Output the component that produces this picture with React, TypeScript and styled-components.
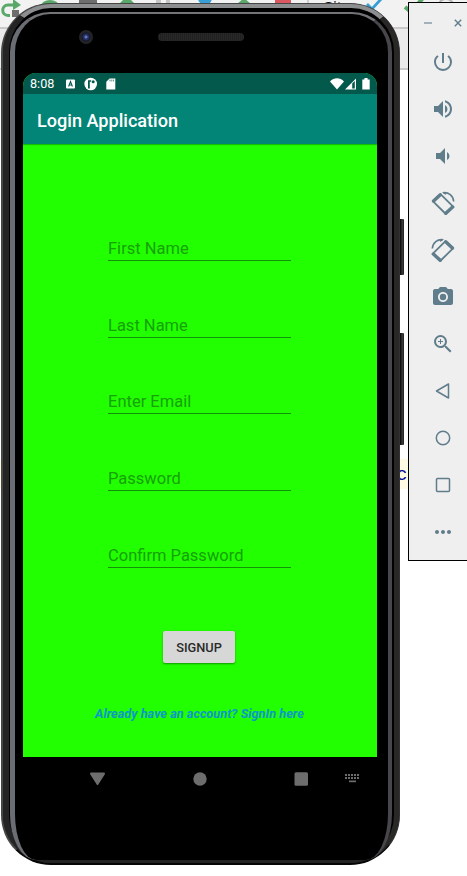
import React from "react";
import styled, { createGlobalStyle } from "styled-components";
import { MdPowerSettingsNew, MdVolumeUp, MdVolumeDown, MdCameraAlt, MdZoomIn, MdMoreHoriz } from "react-icons/md";

const GlobalStyle = createGlobalStyle`
  * { box-sizing: border-box; }
  body { margin: 0; background: #fff; font-family: Roboto, "Liberation Sans", sans-serif; }
`;

const Desktop = styled.main`
  position: relative;
  width: 467px;
  height: 876px;
  overflow: hidden;
  background: #fff;
`;

const IdeToolbar = styled.div`
  display: flex;
  align-items: flex-start;
  height: 29px;
  background: #f2f2f2;
  border-bottom: 2px solid #c9c9c9;
`;

const IdeIcon = styled.svg<{ $gap?: number }>`
  display: block;
  flex: none;
  margin-left: ${(p) => p.$gap ?? 0}px;
`;

const IdeLabel = styled.span`
  flex: none;
  width: 24px;
  margin-left: 13px;
  font: 15px/12px "Noto Sans", sans-serif;
  color: #111;
`;

const IdeTabs = styled.div`
  height: 41px;
  background: #ebebeb;
  border-bottom: 2px solid #c9c9c9;
`;

const CodeLine = styled.div`
  display: flex;
  justify-content: flex-end;
  margin-top: 389px;
  height: 30px;
  padding-right: 49px;
  background: #fffae3;
  color: #0a0a9c;
  font: 18px/32px "Liberation Mono", monospace;
`;

const Phone = styled.section`
  position: absolute;
  left: 1px;
  top: 3px;
  width: 399px;
  height: 862px;
`;

const SideKey = styled.i<{ $top: number; $height: number }>`
  position: absolute;
  right: -4px;
  top: ${(p) => p.$top}px;
  width: 7px;
  height: ${(p) => p.$height}px;
  border-radius: 0 1px 1px 0;
  background: linear-gradient(90deg, #111 0 60%, #4a4847 70%, #1c1a19);
`;

const Shell = styled.div`
  position: relative;
  height: 100%;
  border-style: solid;
  border-width: 1px 1px 2px 2px;
  border-color: #454545 #333 #050505 #464848;
  border-radius: 50px;
  background: #222;
`;

const OuterRim = styled.div`
  height: 100%;
  border-style: solid;
  border-width: 4px 5px 3px 6px;
  border-color: #8d8e90 #292827 #232323 #242424;
  border-radius: 48px;
  background: #000;
`;

const InnerRim = styled.div`
  height: 100%;
  padding: 4px 2px 0 1px;
`;

const Face = styled.div`
  height: 100%;
  display: flex;
  flex-direction: column;
  border-style: solid;
  border-width: 2px 4px 0 5px;
  border-color: #737378 #46464b #000 #6a6d73;
  border-radius: 40px 40px 26px 26px / 40px 40px 46px 46px;
  padding: 0 9px 0 8px;
  background: #000;
`;

const Earpiece = styled.div`
  display: flex;
  align-items: flex-start;
  height: 59px;
  flex: none;
  padding: 16px 0 0 56px;
`;

const Camera = styled.i`
  width: 14px;
  height: 14px;
  border-radius: 50%;
  background: radial-gradient(circle, #6677b0 0 1px, #232d62 2px 3px, #11152a 4px, #242426 5px 7px);
`;

const Speaker = styled.i`
  width: 86px;
  height: 8px;
  margin: 3px 0 0 65px;
  border-radius: 4px;
  background: repeating-linear-gradient(90deg, #202020 0 1px, #292929 1px 2px);
`;

const Screen = styled.div`
  width: 354px;
  height: 684px;
  flex: none;
  display: flex;
  flex-direction: column;
  overflow: hidden;
  border-radius: 13px 13px 0 0;
  background: #22ff00;
`;

const StatusBar = styled.div`
  display: flex;
  align-items: center;
  height: 21px;
  flex: none;
  padding: 1px 6px 0 7px;
  background: #03594c;
  color: #fff;
`;

const Clock = styled.span`
  width: 36px;
  font-size: 12.6px;
  line-height: 20px;
`;

const StatusIcons = styled.div<{ $right?: boolean }>`
  display: flex;
  align-items: center;
  margin-left: ${(p) => (p.$right ? "auto" : "0")};
`;

const AppBar = styled.header`
  display: flex;
  align-items: center;
  height: 50px;
  flex: none;
  padding: 3px 14px 0;
  background: #028577;
  color: #fff;
  font-size: 18.1px;
  font-weight: 500;
  box-shadow: 0 1px 1px rgba(0, 70, 0, 0.35);
`;

const Form = styled.form`
  display: flex;
  flex-direction: column;
  align-items: center;
  padding: 92px 2px 0 0;
`;

const Field = styled.label`
  width: 183px;
  height: 25px;
  margin: 0 0 51.7px;
  padding-left: 0.5px;
  border-bottom: 1px solid #14930a;
  color: #16a208;
  font-size: 16.5px;
  line-height: 25px;
  white-space: nowrap;
`;

const SignupButton = styled.button`
  width: 72px;
  height: 32px;
  margin-top: 11.5px;
  padding: 2px 0 0;
  border: 0;
  border-radius: 2px;
  background: #d6d7d6;
  box-shadow: 0 1px 2px rgba(0, 50, 0, 0.5);
  color: #2a2a2a;
  font: 500 12.8px/30px Roboto, sans-serif;
`;

const SignInLink = styled.a`
  margin: 42px 0 0 1px;
  color: #0b98c8;
  font-size: 12.75px;
  font-style: italic;
  font-weight: 700;
  line-height: 18px;
  white-space: nowrap;
`;

const NavBar = styled.nav`
  display: flex;
  align-items: center;
  height: 43px;
  width: 354px;
  padding-left: 67px;
`;

const NavIcon = styled.svg<{ $gap?: number }>`
  flex: none;
  margin-left: ${(p) => p.$gap ?? 0}px;
  fill: #6d6d6d;
`;

const ControlPanel = styled.aside`
  position: absolute;
  left: 408px;
  top: 2px;
  width: 64px;
  height: 559px;
  border: 1px solid #000;
  background: #efefef;
  color: #607d8b;
`;

const WindowButtons = styled.div`
  display: flex;
  align-items: center;
  height: 35px;
  padding: 5px 0 0 15px;
  gap: 22px;
`;

const Controls = styled.div`
  display: flex;
  flex-direction: column;
  padding-left: 22px;
`;

const Control = styled.span`
  display: flex;
  align-items: center;
  width: 24px;
  height: 47px;
`;

function RotateGlyph({ flip = false }: { flip?: boolean }) {
  return (
    <svg width="24" height="24" viewBox="0 0 24 24" fill="none" stroke="currentColor">
      <g transform={flip ? "translate(24 0) scale(-1 1)" : undefined}>
        <path d="M9.5 3.2 L22.4 15.9 L14.8 23 L1.8 10.2 Z" strokeWidth="1.8" strokeLinejoin="round" />
        <path d="M9.3 3.8 L2.6 10.1 M21.6 16.1 L14.8 22.3" strokeWidth="3.4" strokeLinecap="round" />
        <path d="M12 1.7 C17.5 .9 22.3 4.5 22.7 10.5" strokeWidth="1.6" />
        <path d="M11 1 L15.5 1 L14.6 4 Z" fill="currentColor" stroke="none" />
      </g>
    </svg>
  );
}

const Outline = styled.svg`
  fill: none;
  stroke: currentColor;
  stroke-width: 1.5;
  stroke-linejoin: round;
`;

const fields = ["First Name", "Last Name", "Enter Email", "Password", "Confirm Password"];

export default function App() {
  return (
    <>
      <GlobalStyle />
      <Desktop>
        <IdeToolbar>
          <IdeIcon width="24" height="20" viewBox="0 0 24 20">
            <path d="M10 15.5 H8 C1 15.5 1 5 8 5 H15" fill="none" stroke="#59a869" strokeWidth="3" />
            <path d="M13 -1 L21 5 L13 10Z" fill="#59a869" />
            <rect x="12" y="10" width="7" height="7" fill="#6e6e6e" />
          </IdeIcon>
          <IdeIcon $gap={16} width="20" height="8"><ellipse cx="10" cy="6" rx="9" ry="6" fill="#59a869" /></IdeIcon>
          <IdeIcon $gap={19} width="18" height="8"><rect width="18" height="8" fill="#6e6e6e" /></IdeIcon>
          <IdeIcon $gap={23} width="14" height="8"><path d="M7 -4 L14 3 H0Z" fill="#59a869" /></IdeIcon>
          <IdeIcon $gap={22} width="16" height="8"><path d="M0 0H5V4H10V0H14V8H0Z" fill="#c4c4c4" /></IdeIcon>
          <IdeIcon $gap={25} width="16" height="8"><circle cx="8" cy="-2" r="7" fill="#389fd6" /></IdeIcon>
          <IdeIcon $gap={24} width="14" height="8"><path d="M7 -2 L14 4 H0Z" fill="#59a869" /></IdeIcon>
          <IdeIcon $gap={24} width="16" height="8"><rect width="16" height="8" fill="#db5860" /></IdeIcon>
          <IdeIcon $gap={16} width="2" height="8"><rect width="2" height="8" fill="#cfcfcf" /></IdeIcon>
          <IdeLabel>Git:</IdeLabel>
          <IdeIcon $gap={17} width="26" height="14"><path d="M4 4 L9 9 L19 -2" fill="none" stroke="#389fd6" strokeWidth="2.8" /></IdeIcon>
          <IdeIcon $gap={13} width="28" height="16"><path d="M3 7 L9 12 L21 -2" fill="none" stroke="#59a869" strokeWidth="4" /></IdeIcon>
          <IdeIcon $gap={6} width="22" height="10"><circle cx="10" cy="7" r="8" fill="none" stroke="#b5b5b5" strokeWidth="2" /></IdeIcon>
        </IdeToolbar>
        <IdeTabs />
        <CodeLine>c:</CodeLine>

        <Phone>
          <SideKey $top={216} $height={56} />
          <SideKey $top={330} $height={112} />
          <Shell>
            <OuterRim>
              <InnerRim>
                <Face>
                  <Earpiece>
                    <Camera />
                    <Speaker />
                  </Earpiece>
                  <Screen>
                    <StatusBar>
                      <Clock>8:08</Clock>
                      <StatusIcons>
                        <svg width="50" height="14" viewBox="0 0 50 14">
                          <rect x="0" y="2.5" width="9" height="9" rx="1" fill="#fff" />
                          <path d="M2.6 9.5 L4.5 4.5 L6.4 9.5 M3.3 8 H5.7" fill="none" stroke="#03594c" strokeWidth="1.1" />
                          <circle cx="24.7" cy="7" r="6.3" fill="#fff" />
                          <path d="M22 3.3 H25.2 V4.8 H23.8 V11.5 H22Z" fill="#03594c" />
                          <circle cx="27.2" cy="4.8" r="1.5" fill="#03594c" />
                          <path d="M43.6 1.5 H49.3 V12.5 H40.3 V4.8Z" fill="#fff" />
                          <path d="M44 2.6 V4.4 M45.8 2.6 V4.4 M47.6 2.6 V4.4" stroke="#03594c" strokeWidth=".7" />
                        </svg>
                      </StatusIcons>
                      <StatusIcons $right>
                        <svg width="41" height="14" viewBox="0 0 41 14">
                          <path d="M0 4.5 C4 .2 10 .2 14 4.5 L7 12.5Z" fill="#fff" />
                          <path d="M15 12.5 L26 1.5 V12.5Z" fill="#fff" />
                          <path d="M22.2 6.6 L24.8 4 V11.4 H22.2Z" fill="#03594c" />
                          <path d="M32.3 2.5 H34.4 V1 H37.6 V2.5 H39.7 V12.5 H32.3Z" fill="#fff" />
                        </svg>
                      </StatusIcons>
                    </StatusBar>
                    <AppBar>Login Application</AppBar>
                    <Form>
                      {fields.map((name) => (
                        <Field key={name}>{name}</Field>
                      ))}
                      <SignupButton type="button">SIGNUP</SignupButton>
                      <SignInLink>Already have an account? SignIn here</SignInLink>
                    </Form>
                  </Screen>
                  <NavBar>
                    <NavIcon width="15" height="14"><path d="M.5 .5 H14.5 L15 2 L8 13 H7 L0 2Z" /></NavIcon>
                    <NavIcon $gap={87.5} width="14" height="14"><circle cx="7" cy="7" r="6.7" /></NavIcon>
                    <NavIcon $gap={87.5} width="14" height="14"><rect x=".5" y=".2" width="13.5" height="13.6" rx="1.5" /></NavIcon>
                    <NavIcon $gap={37} width="15" height="9">
                      {[0, 3, 6, 9, 12].map((x) => (
                        <React.Fragment key={x}>
                          <rect x={x} y="0" width="2" height="2" />
                          <rect x={x} y="3" width="2" height="2" />
                        </React.Fragment>
                      ))}
                      <rect x="4" y="6.5" width="7" height="1.7" />
                    </NavIcon>
                  </NavBar>
                </Face>
              </InnerRim>
            </OuterRim>
          </Shell>
        </Phone>

        <ControlPanel>
          <WindowButtons>
            <svg width="8" height="10"><path d="M0 5 H8" stroke="#9aabb4" strokeWidth="1.8" /></svg>
            <svg width="8" height="10"><path d="M.8 1.8 L7.2 8.2 M7.2 1.8 L.8 8.2" stroke="#607d8b" strokeWidth="1.4" /></svg>
          </WindowButtons>
          <Controls>
            <Control><MdPowerSettingsNew size={24} /></Control>
            <Control><MdVolumeUp size={24} /></Control>
            <Control><MdVolumeDown size={24} /></Control>
            <Control><RotateGlyph /></Control>
            <Control><RotateGlyph flip /></Control>
            <Control><MdCameraAlt size={24} /></Control>
            <Control><MdZoomIn size={24} /></Control>
            <Control><Outline width="24" height="24"><path d="M5.5 12 L17.5 5 V19Z" /></Outline></Control>
            <Control><Outline width="24" height="24"><circle cx="12" cy="12" r="6.7" /></Outline></Control>
            <Control><Outline width="24" height="24"><rect x="5.5" y="5.5" width="13" height="13" rx="1" /></Outline></Control>
            <Control><MdMoreHoriz size={24} /></Control>
          </Controls>
        </ControlPanel>
      </Desktop>
    </>
  );
}
